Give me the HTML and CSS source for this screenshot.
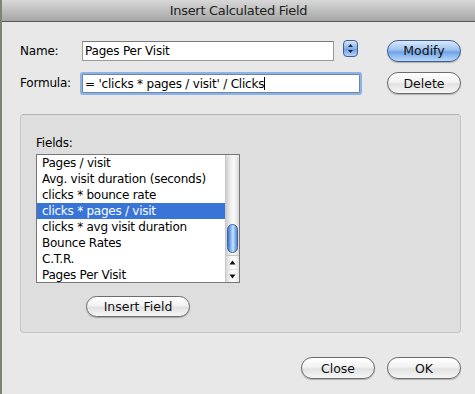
FILE: index.html
```html
<!DOCTYPE html>
<html lang="en">
<head>
    <meta charset="UTF-8">
    <title>Insert Calculated Field</title>
    <link rel="stylesheet" href="styles.css">
</head>
<body>
    <div class="window">
        <div class="titlebar">Insert Calculated Field</div>

        <div class="content">
            <!-- name row -->
            <div class="row name-row">
                <label class="label">Name:</label>
                <div class="textbox name-box">Pages Per Visit</div>
                <div class="stepper">
                    <svg width="7" height="11" viewBox="0 0 7 11"><path d="M3.5 1 L6 4 H1 Z M3.5 10 L6 7 H1 Z" fill="#1b2a44"/></svg>
                </div>
                <button class="button default">Modify</button>
            </div>

            <!-- formula row -->
            <div class="row formula-row">
                <label class="label">Formula:</label>
                <div class="textbox formula-box">= 'clicks * pages / visit' / Clicks<span class="caret"></span></div>
                <button class="button">Delete</button>
            </div>

            <div class="group">
                <div class="group-label">Fields:</div>
                <div class="list">
                    <ul class="items">
                        <li>Pages / visit</li>
                        <li>Avg. visit duration (seconds)</li>
                        <li>clicks * bounce rate</li>
                        <li class="selected">clicks * pages / visit</li>
                        <li>clicks * avg visit duration</li>
                        <li>Bounce Rates</li>
                        <li>C.T.R.</li>
                        <li>Pages Per Visit</li>
                    </ul>
                    <div class="scrollbar">
                        <div class="track">
                            <div class="thumb"></div>
                        </div>
                        <div class="arrows">
                            <div class="arrow"><svg width="7" height="5" viewBox="0 0 7 5"><path d="M3.5 0.5 L6.5 4.5 H0.5 Z" fill="#111"/></svg></div>
                            <div class="arrow"><svg width="7" height="5" viewBox="0 0 7 5"><path d="M3.5 4.5 L6.5 0.5 H0.5 Z" fill="#111"/></svg></div>
                        </div>
                    </div>
                </div>
                <button class="button insert">Insert Field</button>
            </div>

            <div class="footer">
                <button class="button">Close</button>
                <button class="button">OK</button>
            </div>
        </div>
    </div>
</body>
</html>
```

FILE: styles.css
```css
body {
    margin: 0;
    padding: 0;
    font-family: "DejaVu Sans", Verdana, sans-serif;
    font-size: 12px;
    color: #000;
}
.window {
    width: 473px;
    height: 394px;
    background-color: #e8e8e8;
    border-left: 2px solid #7e8476;
    overflow: hidden;
}
.titlebar {
    height: 21px;
    line-height: 22px;
    text-align: center;
    font-size: 13px;
    letter-spacing: -0.3px;
    color: #222;
    background: linear-gradient(#d8d8d8, #a6a6a6);
    border-bottom: 1px solid #555;
}
.content {
    padding: 18px 12px 0 18px;
    width: 441px;
}
.row {
    display: flex;
    align-items: center;
}
.name-row {
    height: 21px;
}
.formula-row {
    height: 22px;
    margin-top: 11px;
}
.label {
    width: 62px;
    font-size: 12px;
    letter-spacing: -0.2px;
}
.textbox {
    box-sizing: border-box;
    background-color: #fff;
    border: 1px solid #9a9a9a;
    border-top-color: #7a7a7a;
    height: 20px;
    line-height: 18px;
    padding-left: 2px;
    font-size: 12px;
    letter-spacing: -0.2px;
    white-space: nowrap;
    overflow: hidden;
}
.name-box {
    width: 252px;
}
.formula-box {
    width: 278px;
    height: 19px;
    border-color: #6f86a8;
    box-shadow: 0 0 0 2px #8bb3e6;
    border-radius: 1px;
}
.caret {
    display: inline-block;
    width: 1px;
    height: 13px;
    background-color: #000;
    vertical-align: -2px;
}
.stepper {
    box-sizing: border-box;
    width: 15px;
    height: 17px;
    margin-left: 9px;
    margin-top: -4px;
    border: 1px solid #3f5f8f;
    border-radius: 4px;
    background: linear-gradient(#d6e6fa, #86b0e8 50%, #6a9be0 51%, #b6d3f6);
    display: flex;
    justify-content: center;
    align-items: center;
}
.button {
    box-sizing: border-box;
    width: 74px;
    height: 22px;
    margin-left: auto;
    border: 1px solid #6c6c6c;
    border-radius: 11px;
    background: linear-gradient(#ffffff, #f2f2f2 45%, #e2e2e2 55%, #f6f6f6);
    box-shadow: 0 1px 1px rgba(0, 0, 0, 0.25);
    font-family: "DejaVu Sans", Verdana, sans-serif;
    font-size: 12.5px;
    color: #111;
    padding: 0;
    cursor: pointer;
}
.button.default {
    border-color: #3f5f8f;
    background: linear-gradient(#d9e9fb, #9cc2ef 45%, #6fa3e6 55%, #b8d8fa);
}
.group {
    margin-top: 20px;
    width: 441px;
    height: 219px;
    box-sizing: border-box;
    background-color: #dedede;
    border: 1px solid #c6c6c6;
    border-top-color: #b4b4b4;
    border-radius: 4px;
    padding: 21px 0 0 15px;
}
.group-label {
    font-size: 12px;
    letter-spacing: -0.2px;
    height: 18px;
}
.list {
    display: flex;
    width: 204px;
    height: 129px;
    box-sizing: border-box;
    border: 1px solid #777;
    background-color: #fff;
}
.items {
    list-style: none;
    margin: 0;
    padding: 0;
    flex: 1;
    overflow: hidden;
}
.items li {
    height: 16px;
    line-height: 16px;
    padding-left: 5px;
    font-size: 12px;
    letter-spacing: -0.25px;
    white-space: nowrap;
}
.items li.selected {
    background-color: #3875d7;
    color: #fff;
}
.scrollbar {
    width: 13px;
    display: flex;
    flex-direction: column;
    background: linear-gradient(90deg, #d8d8d8, #f8f8f8 40%, #ffffff 60%, #e4e4e4);
    border-left: 1px solid #c8c8c8;
}
.track {
    flex: 1;
    position: relative;
    border-radius: 6px 6px 0 0;
    background: linear-gradient(90deg, #cfcfcf, #efefef 35%, #fafafa 60%, #d9d9d9);
}
.thumb {
    position: absolute;
    left: 1px;
    right: 1px;
    top: 69px;
    height: 27px;
    border: 1px solid #3e63a0;
    border-radius: 6px;
    background: linear-gradient(90deg, #3a75d0, #9cc7f5 40%, #c9e1fb 55%, #4f88d8);
}
.arrows {
    height: 26px;
    border-top: 1px solid #c4c4c4;
}
.arrow {
    height: 13px;
    display: flex;
    justify-content: center;
    align-items: center;
}
.arrow + .arrow {
    border-top: 1px solid #e0e0e0;
    height: 12px;
}
.button.insert {
    display: block;
    width: 104px;
    height: 21px;
    margin: 13px 0 0 50px;
}
.footer {
    display: flex;
    justify-content: flex-end;
    gap: 12px;
    margin-top: 24px;
}
.footer .button {
    margin-left: 0;
    width: 74px;
}
```
